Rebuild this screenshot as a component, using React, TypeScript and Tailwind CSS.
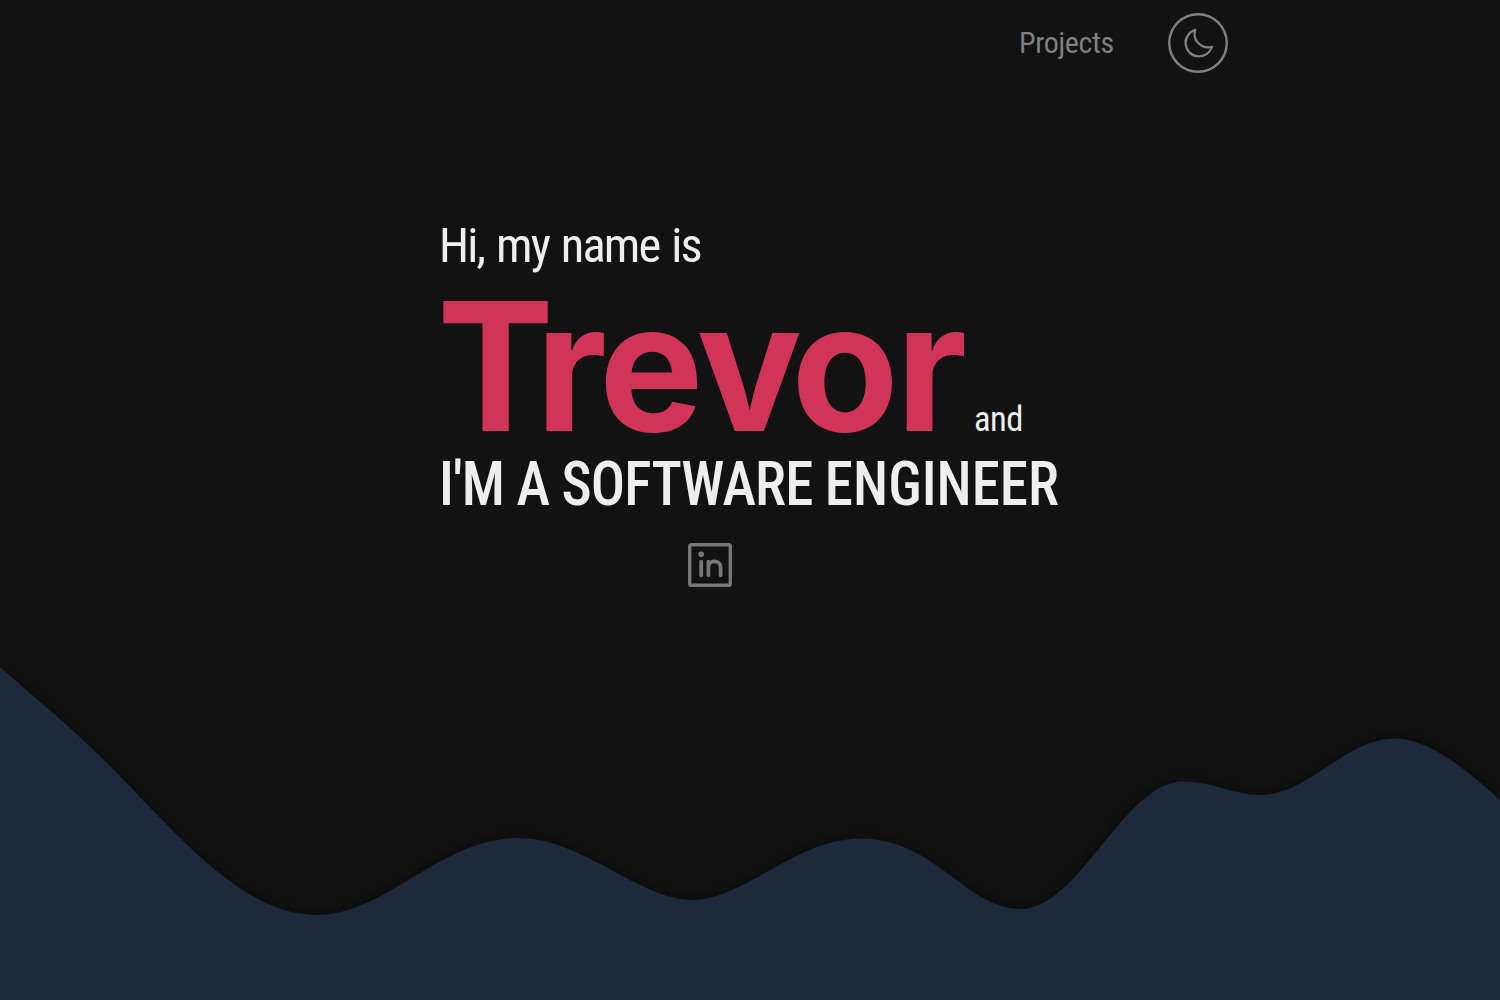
import { PiMoon } from "react-icons/pi";

function LinkedInIcon() {
  return (
    <svg
      className="block size-11"
      viewBox="0 0 44 44"
      fill="none"
      stroke="currentColor"
      strokeWidth="3.8"
      strokeLinecap="round"
    >
      <rect x="1.7" y="1.7" width="40.6" height="40.6" rx="1.8" strokeWidth="3.4" />
      <circle cx="13.2" cy="11.3" r="2.8" fill="currentColor" stroke="none" />
      <path d="M13.2 18.6v13.6" />
      <path d="M20.4 18.6v13.6M20.4 24.2c0-3.6 2.8-5.8 6-5.8s6.2 2 6.2 6v7.8" />
    </svg>
  );
}

function Waves() {
  return (
    <svg
      className="block h-[360px] w-full overflow-visible text-[#1e293b] drop-shadow-[0_0_8px_rgba(0,0,0,0.5)]"
      viewBox="0 640 1500 360"
      preserveAspectRatio="none"
    >
      <path
        fill="currentColor"
        d="M0 667C36 699 71 727 107 763C142 798 178 839 213 868C249 898 282 915 317 915C386 915 440 838 519 838C582 838 640 900 692 900C745 900 795 838.5 861 838.5C935 838.5 966 909 1021 909C1079 909 1124 781.5 1183 781.5C1212 781.5 1234 795 1261 795C1307 795 1347 738.5 1394 738.5C1430 738.5 1468 771 1500 800V1000H0Z"
      />
    </svg>
  );
}

export default function App() {
  return (
    <div className="flex h-[1000px] w-full flex-col overflow-hidden bg-[#121212] font-['Roboto_Condensed',Roboto,sans-serif] text-[#eee]">
      <header className="flex h-[86px] shrink-0 items-center justify-end pr-[272px] text-[#808080]">
        <a
          href="#projects"
          className="mr-[53px] w-[96px] whitespace-nowrap text-[30px] leading-none tracking-[-0.35px]"
        >
          Projects
        </a>
        <button
          type="button"
          aria-label="Toggle theme"
          className="flex size-[60px] items-center justify-center rounded-full pt-px shadow-[inset_0_0_0_2.4px_#808080]"
        >
          <PiMoon size={36} />
        </button>
      </header>

      <main className="ml-[438px] flex h-[554px] shrink-0 flex-col items-start whitespace-nowrap">
        <p className="ml-px mt-[132px] h-[56px] text-[48.5px] leading-[56px] tracking-[-1.85px] [word-spacing:2.5px]">
          Hi, my name is
        </p>
        <div className="mt-[2px] flex h-[180px] items-baseline">
          <h1 className="-ml-px w-[530px] origin-left scale-x-[0.98] font-['Inter',sans-serif] text-[179px] font-bold leading-[180px] text-[#d03459]">
            <span className="tracking-[-19px]">T</span>
            <span className="tracking-[-8px]">r</span>
            <span className="tracking-[-7px]">e</span>
            <span className="tracking-[-11px]">v</span>
            <span className="tracking-[-3px]">o</span>
            <span>r</span>
          </h1>
          <span className="ml-[7px] text-[34.5px] leading-none tracking-[-0.5px]">and</span>
        </div>
        <h2 className="ml-px mt-[-8px] h-[72px] origin-left scale-x-[0.92] text-[62px] font-medium uppercase leading-[72px] tracking-[-0.9px]">
          I'm a software <span className="tracking-[0px]">engineer</span>
        </h2>
        <a href="#linkedin" aria-label="LinkedIn" className="ml-[250px] mt-[23px] text-[#777]">
          <LinkedInIcon />
        </a>
      </main>

      <Waves />
    </div>
  );
}
